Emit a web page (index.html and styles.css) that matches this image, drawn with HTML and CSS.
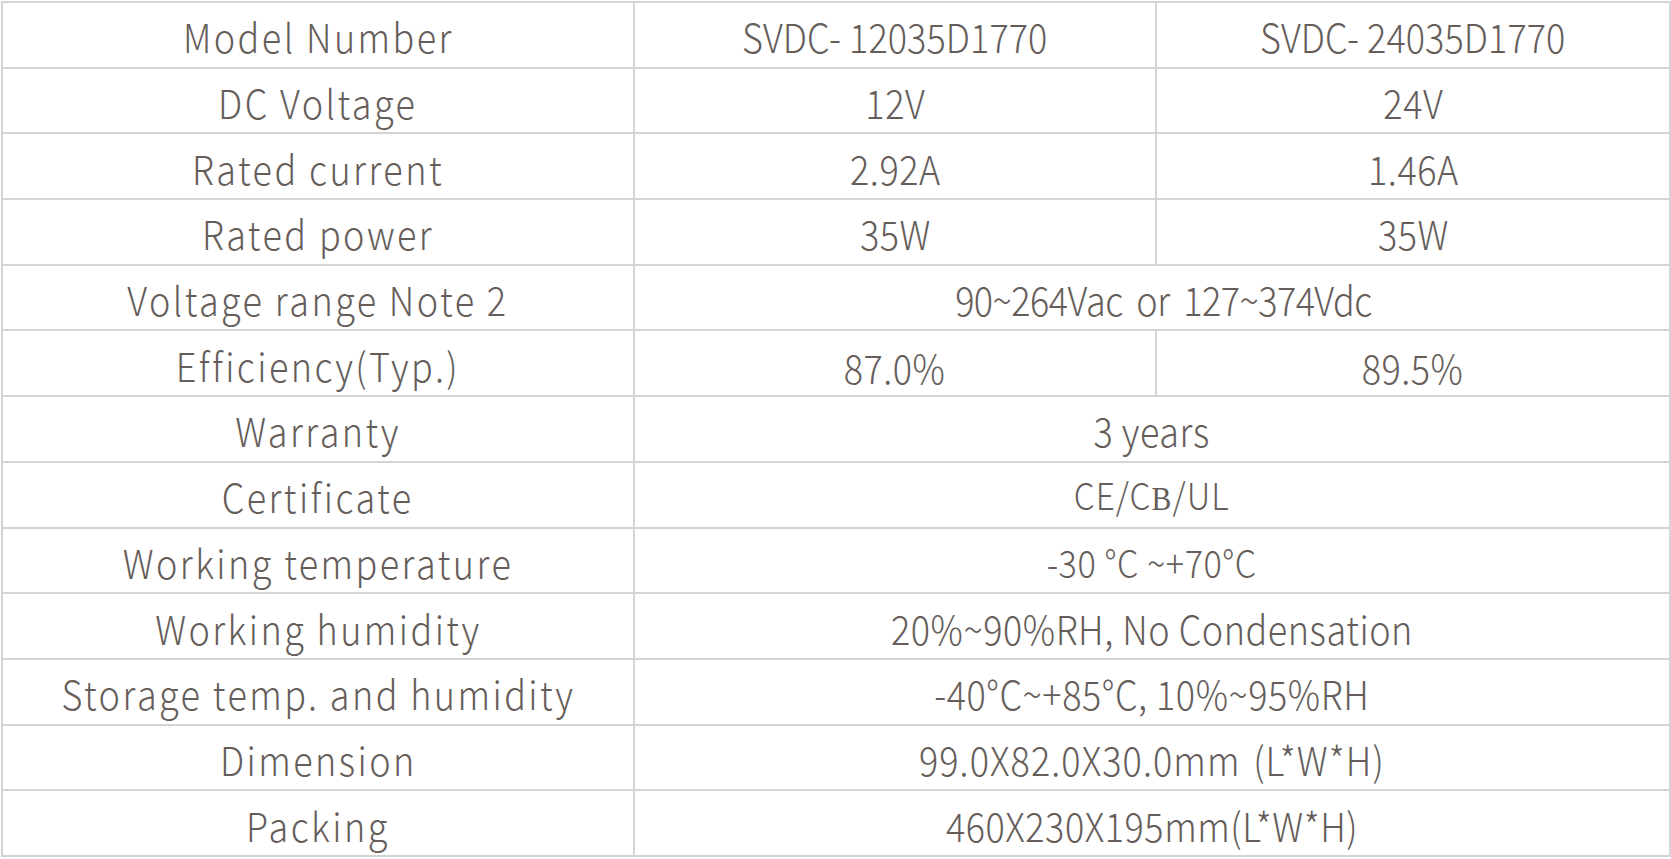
FILE: index.html
```html
<!DOCTYPE html>
<html lang="en">
<head>
<meta charset="utf-8">
<title>Specifications</title>
<link rel="stylesheet" href="styles.css">
</head>
<body>
<table class="spec">
  <colgroup>
    <col class="c1"><col class="c2"><col class="c3">
  </colgroup>
  <tbody>
    <tr><td class="label"><span class="t">Model Number</span></td><td class="val model"><span class="t">SVDC- 12035D1770</span></td><td class="val model"><span class="t">SVDC- 24035D1770</span></td></tr>
    <tr><td class="label"><span class="t">DC Voltage</span></td><td class="val"><span class="t">12V</span></td><td class="val"><span class="t">24V</span></td></tr>
    <tr><td class="label"><span class="t">Rated current</span></td><td class="val"><span class="t">2.92A</span></td><td class="val"><span class="t">1.46A</span></td></tr>
    <tr><td class="label"><span class="t">Rated power</span></td><td class="val"><span class="t">35W</span></td><td class="val"><span class="t">35W</span></td></tr>
    <tr><td class="label"><span class="t">Voltage range Note 2</span></td><td class="val tight" colspan="2"><span class="t">90~264Vac or 127~374Vdc</span></td></tr>
    <tr><td class="label"><span class="t">Efficiency(Typ.)</span></td><td class="val low"><span class="t">87.0%</span></td><td class="val low"><span class="t">89.5%</span></td></tr>
    <tr><td class="label"><span class="t">Warranty</span></td><td class="val" colspan="2"><span class="t">3 years</span></td></tr>
    <tr><td class="label"><span class="t">Certificate</span></td><td class="val wide" colspan="2"><span class="t">CE/C<span class="serif">B</span>/UL</span></td></tr>
    <tr><td class="label"><span class="t">Working temperature</span></td><td class="val temp" colspan="2"><span class="t">-30 °C ~+70°C</span></td></tr>
    <tr><td class="label"><span class="t">Working humidity</span></td><td class="val" colspan="2"><span class="t">20%~90%RH, No Condensation</span></td></tr>
    <tr><td class="label"><span class="t">Storage temp. and humidity</span></td><td class="val" colspan="2"><span class="t">-40°C~+85°C, 10%~95%RH</span></td></tr>
    <tr><td class="label"><span class="t">Dimension</span></td><td class="val dim" colspan="2"><span class="t">99.0X82.0X30.0mm (L*W*H)</span></td></tr>
    <tr><td class="label"><span class="t">Packing</span></td><td class="val" colspan="2"><span class="t">460X230X195mm(L*W*H)</span></td></tr>
  </tbody>
</table>
</body>
</html>
```
FILE: styles.css
```css
html, body {
  margin: 0;
  padding: 0;
  background: #ffffff;
}
body {
  padding: 1px 0 0 1px;
}
.spec {
  border-collapse: collapse;
  width: 1668px;
  height: 856px;
  table-layout: fixed;
  font-family: "Noto Sans CJK SC", "Noto Sans", sans-serif;
  font-weight: 300;
  color: #655d5a;
  font-size: 40px;
}
.c1 { width: 632px; }
.c2 { width: 522px; }
.c3 { width: 514px; }
.spec tr {
  height: 60px;
}
.spec td {
  border: 2px solid #d4d4d4;
  text-align: center;
  vertical-align: middle;
  padding: 3px 0 0 0;
  line-height: 1;
  white-space: nowrap;
}
.t {
  display: inline-block;
  transform: scaleX(0.9);
}
.label { letter-spacing: 2.7px; }
.val { letter-spacing: 0.6px; }
.val.model { letter-spacing: 0.1px; }
.val.tight { letter-spacing: -0.6px; word-spacing: 7px; padding-left: 22px; }
.val.wide { letter-spacing: 1.2px; font-size: 37px; }
.val.temp { font-size: 38px; }
.val.dim { word-spacing: 4px; letter-spacing: 1.2px; }
.val.low { padding-top: 8px; }
.serif {
  font-family: "Liberation Serif", serif;
  font-weight: 400;
  font-size: 33px;
}
```
